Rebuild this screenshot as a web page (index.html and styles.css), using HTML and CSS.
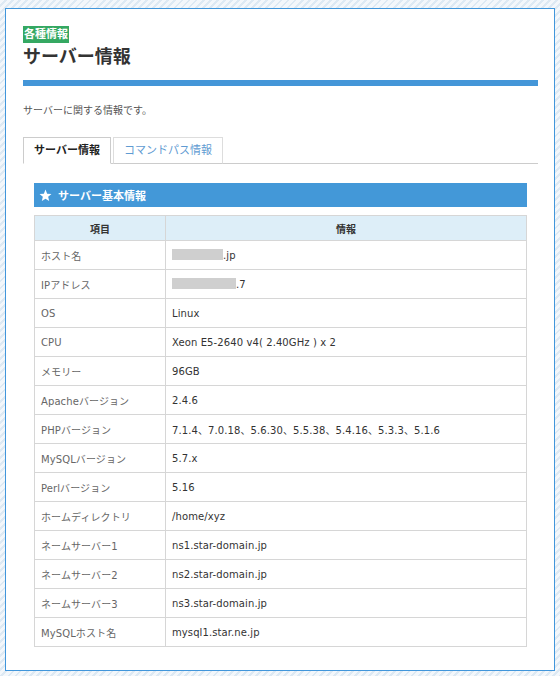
FILE: index.html
```html
<!DOCTYPE html>
<html lang="ja">
<head>
<meta charset="utf-8">
<title>サーバー情報</title>
<link rel="stylesheet" href="styles.css">
</head>
<body>
<div class="card">
  <span class="badge">各種情報</span>
  <h1 class="title">サーバー情報</h1>
  <div class="bar"></div>
  <p class="desc">サーバーに関する情報です。</p>
  <div class="tabs">
    <div class="tab active">サーバー情報</div>
    <div class="tab">コマンドパス情報</div>
  </div>
  <div class="section">
    <div class="section-head">
      <svg class="star" viewBox="0 0 24 24" width="13" height="13"><polygon points="12,1 15,8.6 23,9.2 16.9,14.4 18.8,22.3 12,18 5.2,22.3 7.1,14.4 1,9.2 9,8.6" fill="#fff"/></svg>
      <span>サーバー基本情報</span>
    </div>
    <table class="info">
      <thead>
        <tr><th class="c1">項目</th><th>情報</th></tr>
      </thead>
      <tbody>
        <tr><td class="c1">ホスト名</td><td><span class="mask m1"></span>.jp</td></tr>
        <tr><td class="c1">IPアドレス</td><td><span class="mask m2"></span>.7</td></tr>
        <tr><td class="c1">OS</td><td>Linux</td></tr>
        <tr><td class="c1">CPU</td><td>Xeon E5-2640 v4( 2.40GHz ) x 2</td></tr>
        <tr><td class="c1">メモリー</td><td>96GB</td></tr>
        <tr><td class="c1">Apacheバージョン</td><td>2.4.6</td></tr>
        <tr><td class="c1">PHPバージョン</td><td>7.1.4、7.0.18、5.6.30、5.5.38、5.4.16、5.3.3、5.1.6</td></tr>
        <tr><td class="c1">MySQLバージョン</td><td>5.7.x</td></tr>
        <tr><td class="c1">Perlバージョン</td><td>5.16</td></tr>
        <tr><td class="c1">ホームディレクトリ</td><td>/home/xyz</td></tr>
        <tr><td class="c1">ネームサーバー1</td><td>ns1.star-domain.jp</td></tr>
        <tr><td class="c1">ネームサーバー2</td><td>ns2.star-domain.jp</td></tr>
        <tr><td class="c1">ネームサーバー3</td><td>ns3.star-domain.jp</td></tr>
        <tr><td class="c1">MySQLホスト名</td><td>mysql1.star.ne.jp</td></tr>
      </tbody>
    </table>
  </div>
</div>
</body>
</html>
```
FILE: styles.css
```css
html, body {
  margin: 0;
  padding: 0;
}
body {
  background: repeating-linear-gradient(135deg, #f3f7fb 0 3px, #dde9f3 3px 5px);
  font-family: "DejaVu Sans", "Noto Sans CJK JP", sans-serif;
  color: #333;
  padding: 8px 5px 7px;
}
.card {
  background: #fff;
  border: 1px solid #4196db;
  padding: 17px 16px 17px 17px;
}
.badge {
  display: inline-block;
  background: #35a862;
  color: #fff;
  font-size: 11px;
  font-weight: bold;
  line-height: 17px;
  height: 17px;
  padding: 0 1px;
  vertical-align: top;
}
.title {
  margin: 0;
  font-size: 18px;
  line-height: 24px;
  font-weight: bold;
  color: #333;
}
.bar {
  height: 6px;
  background: #4496d8;
  margin-top: 11px;
}
.desc {
  margin: 17px 0 0;
  font-size: 10px;
  line-height: 16px;
  color: #555;
}
.tabs {
  display: flex;
  gap: 2px;
  margin-top: 18px;
  border-bottom: 1px solid #ccc;
}
.tab {
  border: 1px solid #ddd;
  border-bottom: 1px solid #ccc;
  margin-bottom: -1px;
  padding: 0 10px;
  height: 25px;
  line-height: 25px;
  font-size: 11px;
  color: #5f9bd2;
  background: #fff;
}
.tab.active {
  border-color: #ccc;
  border-bottom-color: #fff;
  color: #222;
  font-weight: bold;
}
.section {
  margin: 19px 11px 6px;
}
.section-head {
  display: flex;
  align-items: center;
  gap: 6px;
  height: 24px;
  padding-left: 5px;
  background: #4398d8;
  color: #fff;
  font-size: 11px;
  font-weight: bold;
}
.star {
  display: block;
}
.info {
  width: 100%;
  margin-top: 8px;
  border-collapse: collapse;
  font-size: 10px;
  letter-spacing: 0.1px;
}
.info th, .info td {
  border: 1px solid #d6d6d6;
  padding: 0 6px;
  text-align: left;
}
.info th {
  height: 24px;
  background: #ddeef8;
  text-align: center;
  font-weight: bold;
  color: #333;
}
.info td {
  height: 28px;
  color: #333;
}
.info td.c1 {
  color: #666;
}
.info .c1 {
  width: 118px;
}
.mask {
  display: inline-block;
  height: 11px;
  background: #cfcfcf;
  vertical-align: -1px;
}
.m1 { width: 51px; }
.m2 { width: 64px; }
```
